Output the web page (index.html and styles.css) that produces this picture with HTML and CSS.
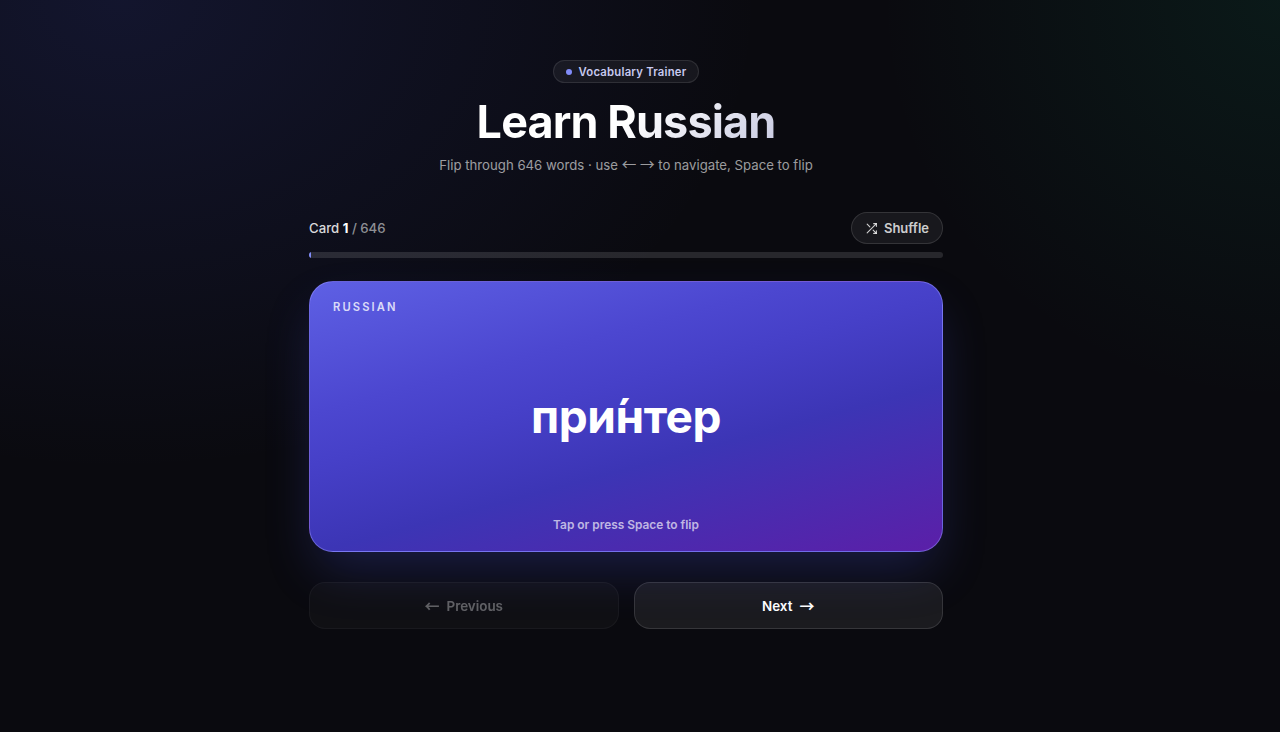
FILE: index.html
```html
<!DOCTYPE html>
<html lang="en">
<head>
<meta charset="utf-8">
<title>Learn Russian</title>
<link rel="stylesheet" href="styles.css">
</head>
<body>
<div class="glow-layer"></div>
<main class="page">
  <header class="hero">
    <div class="badge"><span class="badge-dot"></span>Vocabulary Trainer</div>
    <h1 class="title">Learn Russian</h1>
    <p class="subtitle">Flip through 646 words · use <span class="sub-arrow">←</span> <span class="sub-arrow">→</span> to navigate, Space to flip</p>
  </header>
  <section class="trainer">
    <div class="status-row">
      <div class="counter">Card <strong>1</strong> <span class="total">/ 646</span></div>
      <button class="shuffle" type="button">
        <svg class="shuffle-icon" viewBox="0 0 24 24" fill="none" stroke="currentColor" stroke-width="2" stroke-linecap="round" stroke-linejoin="round"><path d="M16 3h5v5"/><path d="M4 20 21 3"/><path d="M21 16v5h-5"/><path d="m15 15 6 6"/><path d="M4 4l5 5"/></svg>
        Shuffle
      </button>
    </div>
    <div class="progress"><div class="progress-fill"></div></div>
    <div class="card">
      <div class="card-label">RUSSIAN</div>
      <div class="card-word">при́нтер</div>
      <div class="card-hint">Tap or press Space to flip</div>
    </div>
    <div class="nav">
      <button class="nav-btn nav-prev" type="button"><span class="arrow">←</span> Previous</button>
      <button class="nav-btn nav-next" type="button">Next <span class="arrow">→</span></button>
    </div>
  </section>
</main>
</body>
</html>
```
FILE: styles.css
```css
* { box-sizing: border-box; }
html, body { margin: 0; height: 100%; }
body {
  position: relative;
  overflow: hidden;
  background: #0a0a0f;
  color: #fff;
  font-family: Inter, "Liberation Sans", sans-serif;
}
.glow-layer {
  position: absolute;
  inset: 0;
  background:
    radial-gradient(ellipse 640px 470px at 120px 0, rgba(70, 85, 220, 0.15), transparent 100%),
    radial-gradient(ellipse 400px 400px at 1280px 0, rgba(16, 160, 110, 0.1), transparent 100%);
}
.page {
  position: relative;
  width: 1252px;
  padding-top: 60px;
  display: flex;
  flex-direction: column;
  align-items: center;
}
.hero { display: flex; flex-direction: column; align-items: center; }
.badge {
  display: flex;
  align-items: center;
  gap: 7px;
  height: 23px;
  padding: 0 12px;
  border: 1px solid rgba(255, 255, 255, 0.1);
  border-radius: 999px;
  background: rgba(255, 255, 255, 0.05);
  color: #c7c9f0;
  font-size: 11.3px;
  font-weight: 600;
  letter-spacing: 0.02em;
}
.badge-dot { width: 6px; height: 6px; border-radius: 50%; background: #818cf8; }
.title {
  margin: 12px 0 0;
  font-size: 45px;
  line-height: 54px;
  font-weight: 700;
  letter-spacing: -0.02em;
  background: linear-gradient(135deg, #fff 50%, #c7c9e0 100%);
  -webkit-background-clip: text;
  background-clip: text;
  color: transparent;
}
.subtitle {
  margin: 6px 0 0;
  font-size: 13.2px;
  line-height: 20px;
  color: rgba(255, 255, 255, 0.6);
}
.sub-arrow { font-family: "Noto Sans CJK SC", sans-serif; font-size: 14.6px; line-height: 1; }
.trainer { width: 634px; margin-top: 37px; }
.status-row { display: flex; align-items: center; justify-content: space-between; height: 32px; }
.counter { font-size: 13.2px; font-weight: 500; color: rgba(255, 255, 255, 0.85); }
.counter strong { font-weight: 700; color: #fff; }
.total { color: rgba(255, 255, 255, 0.55); }
.shuffle {
  display: flex;
  align-items: center;
  gap: 6px;
  height: 32px;
  padding: 0 13px;
  border: 1px solid rgba(255, 255, 255, 0.12);
  border-radius: 999px;
  background: rgba(255, 255, 255, 0.06);
  color: rgba(255, 255, 255, 0.8);
  font: 600 13px Inter, "Liberation Sans", sans-serif;
}
.shuffle-icon { width: 13px; height: 13px; }
.progress {
  height: 6px;
  margin-top: 8px;
  border-radius: 999px;
  background: rgba(255, 255, 255, 0.12);
  overflow: hidden;
}
.progress-fill { width: 0.3%; height: 100%; background: #818cf8; }
.card {
  position: relative;
  display: flex;
  align-items: center;
  justify-content: center;
  height: 271px;
  margin-top: 23px;
  padding-bottom: 2px;
  border: 1px solid rgba(150, 145, 255, 0.5);
  border-radius: 24px;
  background: linear-gradient(165deg, #5e60e4 0%, #4c47d0 30%, #4640c8 42%, #3c35b5 62%, #5b1fa8 100%);
  box-shadow: 0 24px 50px -8px rgba(70, 80, 210, 0.28);
}
.card-label {
  position: absolute;
  top: 18px;
  left: 23px;
  font-size: 11.2px;
  font-weight: 600;
  letter-spacing: 0.19em;
  color: rgba(255, 255, 255, 0.8);
}
.card-word {
  font-size: 46px;
  font-weight: 700;
  letter-spacing: -0.01em;
  color: #fff;
  font-feature-settings: "mark" 0;
}
.card-hint {
  position: absolute;
  bottom: 19px;
  left: 0;
  right: 0;
  text-align: center;
  font-size: 11.9px;
  font-weight: 600;
  color: rgba(255, 255, 255, 0.67);
}
.nav { display: flex; gap: 15px; margin-top: 30px; }
.nav-btn {
  flex: 1;
  display: flex;
  align-items: center;
  justify-content: center;
  gap: 7px;
  height: 47px;
  border: 1px solid rgba(255, 255, 255, 0.12);
  border-radius: 16px;
  background: rgba(255, 255, 255, 0.07);
  color: #fff;
  font: 600 13.4px Inter, "Liberation Sans", sans-serif;
}
.nav-prev { opacity: 0.35; }
.arrow { font-family: "Noto Sans CJK SC", sans-serif; font-size: 15px; line-height: 1; }
```
